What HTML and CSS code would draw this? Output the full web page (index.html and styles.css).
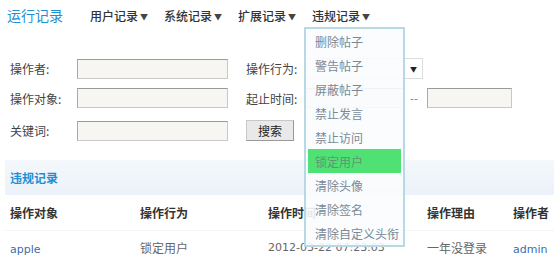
FILE: index.html
```html
<!DOCTYPE html>
<html lang="zh">
<head>
<meta charset="utf-8">
<title>运行记录</title>
<link rel="stylesheet" href="styles.css">
</head>
<body>
<div class="page">
  <header class="topbar">
    <h1 class="title">运行记录</h1>
    <nav class="nav">
      <span class="nav-item">用户记录<i class="caret">▼</i></span>
      <span class="nav-item">系统记录<i class="caret">▼</i></span>
      <span class="nav-item">扩展记录<i class="caret">▼</i></span>
      <span class="nav-item">违规记录<i class="caret">▼</i></span>
    </nav>
  </header>

  <form class="filters">
    <div class="frow r1">
      <label class="lbl">操作者:</label>
      <span class="inp wide"></span>
      <label class="lbl lbl2">操作行为:</label>
      <span class="select"><i class="sel-arrow">▼</i></span>
    </div>
    <div class="frow r2">
      <label class="lbl">操作对象:</label>
      <span class="inp wide"></span>
      <label class="lbl lbl2">起止时间:</label>
      <span class="inp date1"></span>
      <span class="dash">--</span>
      <span class="inp date2"></span>
    </div>
    <div class="frow r3">
      <label class="lbl">关键词:</label>
      <span class="inp wide"></span>
      <span class="btn">搜索</span>
    </div>
  </form>

  <section class="panel">
    <div class="panel-head">违规记录</div>
    <table class="grid">
      <colgroup>
        <col class="c1"><col class="c2"><col class="c3"><col class="c4"><col class="c5">
      </colgroup>
      <thead>
        <tr><th>操作对象</th><th>操作行为</th><th>操作时间</th><th>操作理由</th><th>操作者</th></tr>
      </thead>
      <tbody>
        <tr><td><a class="link">apple</a></td><td>锁定用户</td><td class="num">2012-03-22 07:23:03</td><td>一年没登录</td><td><a class="link">admin</a></td></tr>
      </tbody>
    </table>
  </section>

  <ul class="menu">
    <li>删除帖子</li>
    <li>警告帖子</li>
    <li>屏蔽帖子</li>
    <li>禁止发言</li>
    <li>禁止访问</li>
    <li class="active">锁定用户</li>
    <li>清除头像</li>
    <li>清除签名</li>
    <li>清除自定义头衔</li>
  </ul>
</div>
</body>
</html>
```

FILE: styles.css
```css
* { box-sizing: border-box; }
html, body { margin: 0; padding: 0; background: #fff; }
body {
  font-family: "Noto Sans CJK SC", "DejaVu Sans", sans-serif;
  font-size: 12px;
  color: #444;
}
.page { position: relative; width: 554px; height: 270px; overflow: hidden; }

.topbar { display: flex; align-items: center; height: 30px; padding-left: 7px; }
.title { margin: 0; font-size: 14px; font-weight: normal; color: #1f8fd2; width: 83px; }
.nav { display: flex; }
.nav-item { width: 74px; font-size: 12px; color: #333; font-weight: 500; white-space: nowrap; }
.caret { font-style: normal; font-size: 8px; margin-left: 2px; color: #444; position: relative; top: -1px; }

.filters { padding: 28px 0 0 10px; }
.frow { display: flex; align-items: center; }
.r1 { height: 21px; }
.r2 { height: 20px; margin-top: 9px; }
.r3 { height: 21px; margin-top: 12px; }
.lbl { width: 67px; color: #444; }
.lbl2 { width: 59px; margin-left: 18px; }
.inp { display: block; height: 20px; border: 1px solid #c8c8c8; border-top-color: #9a9a9a; border-left-color: #aaa; background: #f7f6f3; }
.wide { width: 151px; }
.date1 { width: 100px; }
.date2 { width: 85px; }
.dash { width: 22px; padding-right: 4px; text-align: center; color: #888; font-family: "DejaVu Sans", sans-serif; font-size: 11px; }
.select { display: flex; align-items: center; justify-content: flex-end; width: 118px; height: 21px; border: 1px solid #ddd; background: #fff; padding-right: 5px; }
.sel-arrow { font-style: normal; font-size: 7px; color: #222; }
.btn { display: flex; align-items: center; justify-content: center; width: 48px; height: 21px; margin-left: 18px; background: #e9e9e9; border: 1px solid #c8c8c8; border-right-color: #999; border-bottom-color: #999; color: #222; font-size: 12px; }

.panel { margin: 19px 0 0 5px; }
.panel-head { height: 35px; display: flex; align-items: center; padding-left: 5px; font-weight: bold; color: #1f8fd2; background: linear-gradient(#f4f8fc, #ebf2f9); }
.grid { width: 549px; border-collapse: collapse; table-layout: fixed; }
.c1 { width: 130px; } .c2 { width: 128px; } .c3 { width: 159px; } .c4 { width: 86px; } .c5 { width: 46px; }
.grid th, .grid td { text-align: left; padding: 0 0 0 5px; white-space: nowrap; overflow: visible; }
.grid th { height: 35px; font-weight: bold; color: #333; border-bottom: 1px solid #f2f5f8; }
.grid td { height: 34px; color: #666; }
.num { font-family: "DejaVu Sans", sans-serif; font-size: 11px; color: #444; }
.link { font-family: "DejaVu Sans", sans-serif; font-size: 11px; color: #3b6db0; text-decoration: none; }

.menu {
  position: absolute; left: 304px; top: 27px; width: 101px;
  margin: 0; padding: 0 2px;
  list-style: none;
  border: 2px solid #b9d8e6;
  background: rgba(250, 252, 253, 0.9);
}
.menu li { height: 24px; display: flex; align-items: center; padding-left: 7px; color: #7b8995; font-size: 12px; }
.menu li.active { background: #4fe173; color: #5f9670; }
```
